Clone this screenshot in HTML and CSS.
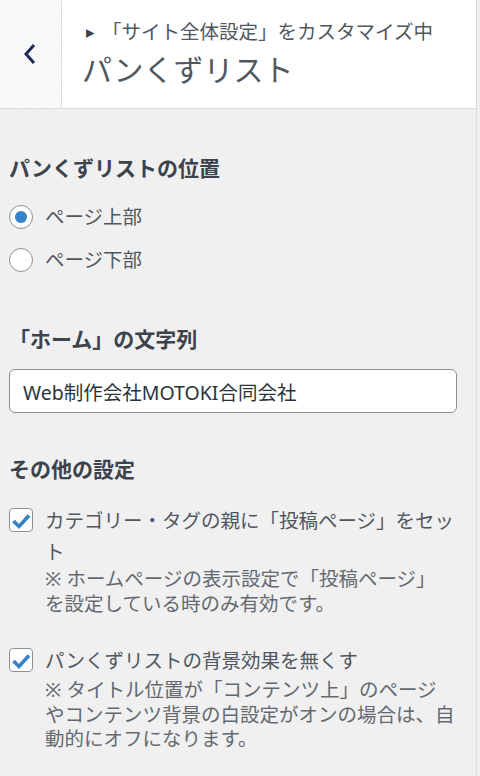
FILE: index.html
```html
<!DOCTYPE html>
<html lang="ja">
<head>
<meta charset="utf-8">
<title>パンくずリスト</title>
<link rel="stylesheet" href="styles.css">
</head>
<body>
<div class="panel">
  <header class="head">
    <button class="back" aria-label="戻る">
      <svg width="14" height="22" viewBox="0 0 14 22"><path d="M11 2 L3 11 L11 20" fill="none" stroke="#1f2b57" stroke-width="3" stroke-linejoin="miter"/></svg>
    </button>
    <div class="titles">
      <div class="action"><span class="arrow">▸</span>「サイト全体設定」をカスタマイズ中</div>
      <h1 class="title">パンくずリスト</h1>
    </div>
  </header>
  <main class="content">
    <section class="control first">
      <h2 class="ctitle">パンくずリストの位置</h2>
      <label class="radio-row"><span class="radio checked"></span><span class="rlabel">ページ上部</span></label>
      <label class="radio-row"><span class="radio"></span><span class="rlabel">ページ下部</span></label>
    </section>
    <section class="control second">
      <h2 class="ctitle">「ホーム」の文字列</h2>
      <div class="input">Web制作会社MOTOKI合同会社</div>
    </section>
    <section class="control third">
      <h2 class="ctitle">その他の設定</h2>
      <div class="check-row">
        <span class="check"><svg width="22" height="22" viewBox="0 0 22 22"><path d="M3.5 12 L9 17.5 L19 6.5" fill="none" stroke="#3582c4" stroke-width="3.6"/></svg></span>
        <div class="ctext">
          <div class="clabel">カテゴリー・タグの親に「投稿ページ」をセット</div>
          <div class="desc">※ ホームページの表示設定で「投稿ページ」<br>を設定している時のみ有効です。</div>
        </div>
      </div>
      <div class="check-row second-check">
        <span class="check"><svg width="22" height="22" viewBox="0 0 22 22"><path d="M3.5 12 L9 17.5 L19 6.5" fill="none" stroke="#3582c4" stroke-width="3.6"/></svg></span>
        <div class="ctext">
          <div class="clabel">パンくずリストの背景効果を無くす</div>
          <div class="desc d2">※ タイトル位置が「コンテンツ上」のページ<br>やコンテンツ背景の白設定がオンの場合は、自<br>動的にオフになります。</div>
        </div>
      </div>
    </section>
  </main>
</div>
</body>
</html>
```

FILE: styles.css
```css
html, body {
  margin: 0;
  padding: 0;
}
body {
  background: #f0f0f1;
  font-family: "Noto Sans", "Noto Sans CJK JP", sans-serif;
  color: #50575e;
  width: 480px;
  height: 776px;
  overflow: hidden;
}
.panel {
  width: 476px;
  height: 776px;
  border-right: 1px solid #dcdcde;
  background: #f0f0f1;
}
.head {
  display: flex;
  height: 108px;
  background: #fff;
  border-bottom: 1px solid #dcdcde;
}
.back {
  width: 62px;
  height: 108px;
  border: 0;
  border-right: 1px solid #dcdcde;
  padding: 0;
  margin: 0;
  display: flex;
  align-items: center;
  justify-content: center;
  background-color: #f6f7f7;
  background-image: repeating-linear-gradient(45deg, rgba(255,255,255,0.7) 0 1px, rgba(0,0,0,0) 1px 3px);
}
.back svg {
  display: block;
  margin-left: -2px;
}
.titles {
  padding: 20px 0 0 20px;
}
.action {
  font-size: 19.5px;
  line-height: 24px;
  color: #50575e;
  white-space: nowrap;
}
.arrow {
  font-size: 17px;
  display: inline-block;
  width: 20px;
  padding-left: 4px;
  box-sizing: border-box;
  vertical-align: 1px;
  color: #3c434a;
}
.title {
  margin: 6px 0 0;
  font-size: 30px;
  line-height: 40px;
  font-weight: 400;
  color: #50575e;
}
.content {
  padding: 0 19px 0 9px;
}
.ctitle {
  margin: 0;
  font-size: 21px;
  line-height: 28px;
  font-weight: 700;
  color: #3c434a;
}
.control.first {
  padding-top: 45px;
}
.control.first .ctitle {
  margin-bottom: 13px;
}
.radio-row {
  display: flex;
  align-items: center;
  height: 43px;
  gap: 12px;
}
.radio {
  width: 24px;
  height: 24px;
  box-sizing: border-box;
  border: 1px solid #8c8f94;
  border-radius: 50%;
  background: #fff;
  display: flex;
  align-items: center;
  justify-content: center;
}
.radio.checked::after {
  content: "";
  width: 12px;
  height: 12px;
  border-radius: 50%;
  background: #3582c4;
}
.rlabel {
  font-size: 19.5px;
  line-height: 31px;
  color: #50575e;
}
.control.second {
  padding-top: 44px;
}
.control.second .ctitle {
  margin-bottom: 16px;
}
.input {
  height: 44px;
  box-sizing: border-box;
  border: 1px solid #8c8f94;
  border-radius: 6px;
  background: #fff;
  padding: 0 13px;
  display: flex;
  align-items: center;
  font-size: 19.5px;
  color: #2c3338;
}
.control.third {
  padding-top: 42px;
}
.control.third .ctitle {
  margin-bottom: 22px;
}
.check-row {
  display: flex;
  gap: 12px;
  align-items: flex-start;
}
.second-check {
  margin-top: 29px;
}
.check {
  flex: none;
  width: 24px;
  height: 24px;
  margin-top: 3px;
  box-sizing: border-box;
  border: 1px solid #8c8f94;
  border-radius: 4px;
  background: #fff;
  display: flex;
  align-items: center;
  justify-content: center;
}
.check svg {
  display: block;
}
.ctext {
  flex: 1;
  font-size: 19.5px;
}
.clabel {
  line-height: 31px;
  color: #50575e;
}
.desc {
  line-height: 24.5px;
  color: #646970;
}
.desc.d2 {
  margin-top: 2px;
}
```
